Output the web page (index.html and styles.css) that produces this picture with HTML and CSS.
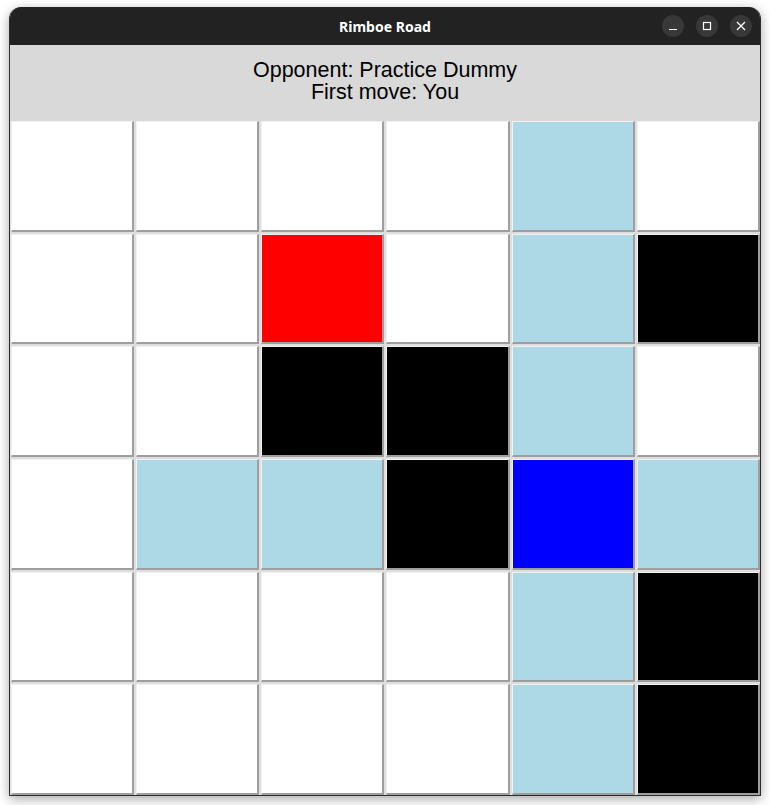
FILE: index.html
```html
<!DOCTYPE html>
<html>
<head>
<meta charset="utf-8">
<title>Rimboe Road</title>
<link rel="stylesheet" href="styles.css">
</head>
<body>
<div class="window">
  <div class="titlebar">
    <span class="title">Rimboe Road</span>
    <div class="controls">
      <span class="ctl"><svg width="10" height="10" viewBox="0 0 10 10"><line x1="1" y1="8.5" x2="9" y2="8.5" stroke="#fff" stroke-width="1.2"/></svg></span>
      <span class="ctl"><svg width="10" height="10" viewBox="0 0 10 10"><rect x="1.5" y="1.5" width="7" height="7" fill="none" stroke="#fff" stroke-width="1.2"/></svg></span>
      <span class="ctl"><svg width="10" height="10" viewBox="0 0 10 10"><path d="M1 1L9 9M9 1L1 9" stroke="#fff" stroke-width="1.3"/></svg></span>
    </div>
  </div>
  <div class="header">
    <div>Opponent: Practice Dummy</div>
    <div>First move: You</div>
  </div>
  <div class="board">
    <div class="cell w"></div><div class="cell w"></div><div class="cell w"></div><div class="cell w"></div><div class="cell lb"></div><div class="cell w"></div>
    <div class="cell w"></div><div class="cell w"></div><div class="cell r"></div><div class="cell w"></div><div class="cell lb"></div><div class="cell k"></div>
    <div class="cell w"></div><div class="cell w"></div><div class="cell k"></div><div class="cell k"></div><div class="cell lb"></div><div class="cell w"></div>
    <div class="cell w"></div><div class="cell lb"></div><div class="cell lb"></div><div class="cell k"></div><div class="cell b"></div><div class="cell lb"></div>
    <div class="cell w"></div><div class="cell w"></div><div class="cell w"></div><div class="cell w"></div><div class="cell lb"></div><div class="cell k"></div>
    <div class="cell w"></div><div class="cell w"></div><div class="cell w"></div><div class="cell w"></div><div class="cell lb"></div><div class="cell k"></div>
  </div>
</div>
</body>
</html>
```
FILE: styles.css
```css
html, body {
  margin: 0;
  padding: 0;
  background: #ffffff;
}
body {
  width: 770px;
  height: 805px;
  overflow: hidden;
}
.window {
  box-sizing: border-box;
  margin: 7px 0 0 9px;
  width: 752px;
  height: 789px;
  border: 1px solid #2e2e2e;
  border-top: none;
  border-radius: 12px 12px 0 0;
  box-shadow: 0 3px 12px rgba(0,0,0,0.35);
  display: flex;
  flex-direction: column;
  background: #d9d9d9;
  overflow: hidden;
}
.titlebar {
  height: 38px;
  flex: none;
  background: #222222;
  display: flex;
  align-items: center;
  justify-content: center;
  position: relative;
}
.title {
  color: #ffffff;
  font-family: "Noto Sans", "DejaVu Sans", sans-serif;
  font-weight: bold;
  font-size: 14px;
}
.controls {
  position: absolute;
  right: 8px;
  top: 8px;
  display: flex;
  gap: 12px;
}
.ctl {
  width: 22px;
  height: 22px;
  border-radius: 50%;
  background: #383838;
  display: flex;
  align-items: center;
  justify-content: center;
}
.header {
  height: 76px;
  flex: none;
  display: flex;
  flex-direction: column;
  justify-content: center;
  align-items: center;
  font-family: "Liberation Sans", Arial, sans-serif;
  font-size: 21.5px;
  line-height: 22px;
  color: #000;
  padding-bottom: 5px;
  box-sizing: border-box;
}
.board {
  flex: 1;
  display: grid;
  grid-template-columns: repeat(6, 1fr);
  grid-template-rows: repeat(6, 1fr);
  gap: 2px;
  padding: 0 0 0 1px;
  background: #dedede;
}
.cell {
  border-style: solid;
  border-width: 1px 2px 2px 1px;
  border-color: #f2f2f2 #9e9e9e #9e9e9e #f2f2f2;
}
.w { background: #ffffff; }
.lb { background: #add8e6; }
.r { background: #ff0000; }
.k { background: #000000; }
.b { background: #0000ff; }
```
